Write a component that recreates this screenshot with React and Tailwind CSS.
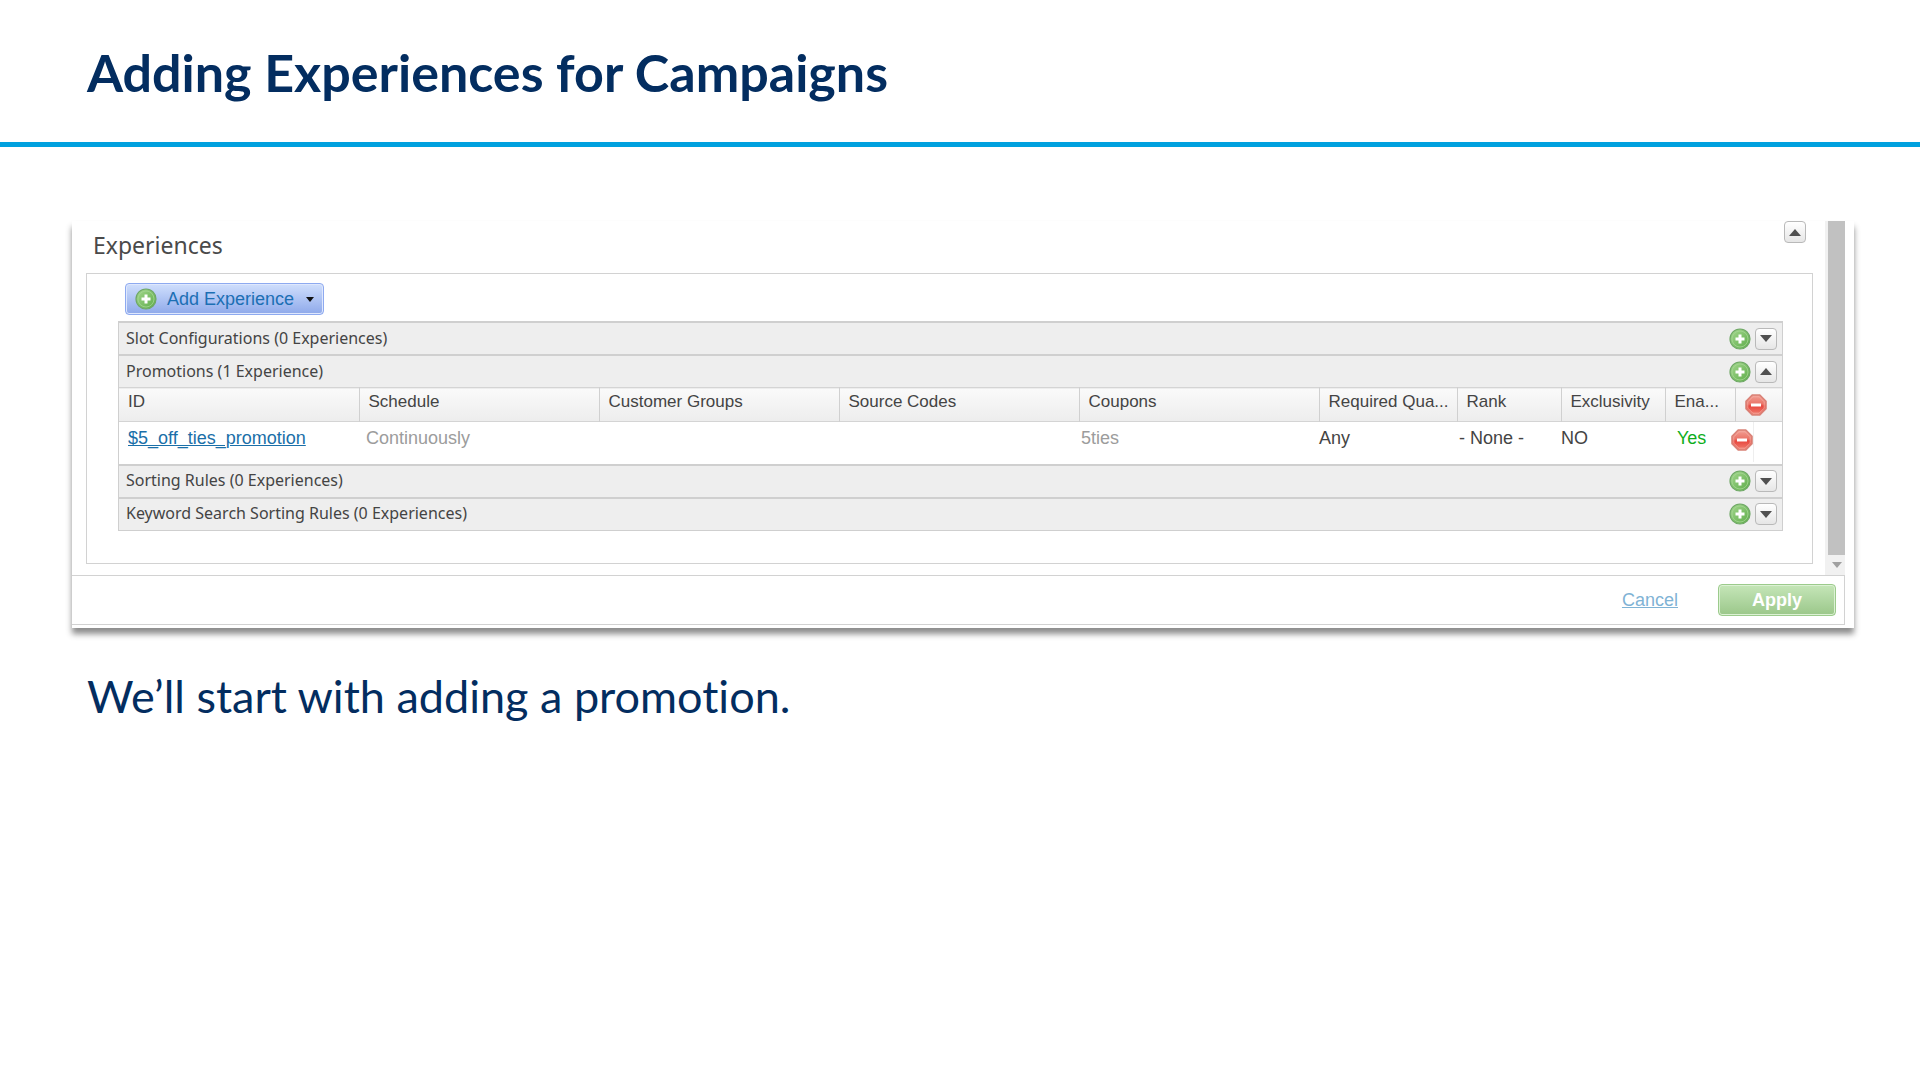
import { useState } from "react";

const columns = [
  { label: "ID" },
  { label: "Schedule" },
  { label: "Customer Groups" },
  { label: "Source Codes" },
  { label: "Coupons" },
  { label: "Required Qua...", width: "w-[138px]" },
  { label: "Rank", width: "w-[104px]" },
  { label: "Exclusivity", width: "w-[104px]" },
  { label: "Ena...", width: "w-[70px]" },
];

function AddIcon() {
  return (
    <svg viewBox="0 0 22 22" className="size-[22px] shrink-0" aria-hidden="true">
      <defs>
        <linearGradient id="addFill" x1="0" y1="0" x2="1" y2="1">
          <stop offset="0" stopColor="#a5d88f" />
          <stop offset="1" stopColor="#5cab48" />
        </linearGradient>
      </defs>
      <circle cx="11" cy="11" r="10" fill="url(#addFill)" stroke="#6fa866" strokeWidth="1.2" />
      <circle cx="11" cy="11" r="8" fill="none" stroke="#a5d694" strokeWidth="0.8" />
      <path d="M11 6.5v9M6.5 11h9" stroke="#fff" strokeWidth="3" />
    </svg>
  );
}

function RemoveIcon() {
  return (
    <svg viewBox="0 0 22 22" className="size-[22px] shrink-0" aria-hidden="true">
      <defs>
        <linearGradient id="removeFill" x1="0" y1="0" x2="0" y2="1">
          <stop offset="0" stopColor="#f2a094" />
          <stop offset="0.45" stopColor="#ea7468" />
          <stop offset="0.55" stopColor="#e8473e" />
          <stop offset="1" stopColor="#f08072" />
        </linearGradient>
      </defs>
      <path
        d="M7.2 1h7.6L21 7.2v7.6L14.8 21H7.2L1 14.8V7.2z"
        fill="url(#removeFill)"
        stroke="#d98277"
        strokeWidth="1.6"
        strokeLinejoin="round"
      />
      <path
        d="M7.8 2.8h6.4l5 5v6.4l-5 5H7.8l-5-5V7.8z"
        fill="none"
        stroke="#f4aea4"
        strokeWidth="0.8"
      />
      <path d="M6 11h10" stroke="#fff" strokeWidth="3" />
    </svg>
  );
}

function ToggleButton({ open, label, onClick }) {
  return (
    <button
      type="button"
      aria-label={label}
      aria-expanded={open}
      onClick={onClick}
      className="flex size-[22px] shrink-0 items-center justify-center rounded border border-[#b9b9b9] bg-linear-to-b from-white to-[#e6e6e6]"
    >
      <svg viewBox="0 0 12 7" className="h-[7px] w-3">
        <path d={open ? "M6 0l6 7H0z" : "M0 0h12L6 7z"} fill="#505050" />
      </svg>
    </button>
  );
}

function Section({ title, open, onToggle, children }) {
  return (
    <section>
      <div className="flex h-[33px] items-center justify-between border-t-2 border-[#cfcfcf] bg-[#eeeeee] pr-[5px] pl-[7px]">
        <h3 className="pb-[2px] font-['Noto_Sans',sans-serif] text-[16px] leading-6 text-[#444]">
          {title}
        </h3>
        <div className="flex items-center gap-1">
          <button type="button" aria-label={`Add to ${title}`}>
            <AddIcon />
          </button>
          <ToggleButton open={open} label={`Toggle ${title}`} onClick={onToggle} />
        </div>
      </div>
      {open && children}
    </section>
  );
}

function PromotionsTable() {
  return (
    <table className="w-full table-fixed border-collapse bg-white text-left">
      <thead>
        <tr className="h-[34px] border-y border-[#d4d4d4] bg-linear-to-b from-[#fafafa] to-[#ededed] text-[17px] leading-6 text-[#444]">
          {columns.map((col) => (
            <th
              key={col.label}
              scope="col"
              className={`border-r border-[#d0d0d0] pb-[5px] pl-[9px] font-normal whitespace-nowrap ${col.width || ""}`}
            >
              {col.label}
            </th>
          ))}
          <th scope="col" className="w-[47px] pl-[9px]">
            <button type="button" aria-label="Remove all" className="block">
              <RemoveIcon />
            </button>
          </th>
        </tr>
      </thead>
      <tbody>
        <tr className="h-[42px] align-top text-[18px] leading-8 text-[#444]">
          <td className="pl-[9px]">
            <a href="#promotion" className="text-[#1a6fa8] underline">
              $5_off_ties_promotion
            </a>
          </td>
          <td className="pl-[7px] text-[#9c9c9c]">Continuously</td>
          <td></td>
          <td></td>
          <td className="pl-[2px] text-[#9c9c9c]">5ties</td>
          <td>Any</td>
          <td className="pl-[2px]">- None -</td>
          <td>NO</td>
          <td className="pl-3 text-[#0fae1c]">Yes</td>
          <td>
            <button
              type="button"
              aria-label="Remove promotion"
              className="-ml-1 flex h-10 items-center border-r border-[#eeeeee] pb-1"
            >
              <RemoveIcon />
            </button>
          </td>
        </tr>
      </tbody>
    </table>
  );
}

export default function App() {
  const [panelOpen, setPanelOpen] = useState(true);
  const [open, setOpen] = useState({ promotions: true });

  const toggle = (key) => setOpen((prev) => ({ ...prev, [key]: !prev[key] }));

  return (
    <div className="min-h-screen bg-white font-['Liberation_Sans',Arial,sans-serif]">
      <header className="border-b-[5px] border-[#00a1df] pt-10 pb-[38px] pl-[87px]">
        <h1 className="font-['Lato',sans-serif] text-[52px] leading-16 font-bold text-[#032d60]">
          Adding Experiences for Campaigns
        </h1>
      </header>

      <main className="pt-[74px] pr-[66px] pl-[72px]">
        <div className="bg-white pr-[9px] pb-[3px] shadow-[0_6px_6px_0_rgba(0,0,0,0.45)]">
          {/* Scrollable area */}
          <div className="flex">
            <div className="min-w-0 flex-1 pr-3 pb-[11px] pl-[14px]">
              <div className="flex h-[52px] items-start justify-between pr-[7px] pl-[7px]">
                <h2 className="pt-2 font-['Noto_Sans',sans-serif] text-[23px] leading-8 text-[#4a4a4a]">
                  Experiences
                </h2>
                <ToggleButton
                  open={panelOpen}
                  label="Toggle experiences"
                  onClick={() => setPanelOpen(!panelOpen)}
                />
              </div>

              {panelOpen && (
                <div className="border border-[#d2d2d2] pt-[9px] pr-[29px] pb-8 pl-[31px]">
                  <button
                    type="button"
                    className="ml-[7px] flex h-8 items-center rounded border border-[#8eaaf0] bg-linear-to-b from-[#d0dffc] to-[#8fa9ea] px-[9px] text-[18px] leading-6 text-[#1c6fb4] inset-ring-1 inset-ring-[#dfe8fd]"
                  >
                    <AddIcon />
                    <span className="pr-3 pl-[10px]">Add Experience</span>
                    <svg viewBox="0 0 8 5" className="h-[5px] w-2">
                      <path d="M0 0h8L4 5z" fill="#111" />
                    </svg>
                  </button>

                  <div className="mt-[6px] border border-t-0 border-[#cfcfcf]">
                    <Section
                      title="Slot Configurations (0 Experiences)"
                      open={!!open.slots}
                      onToggle={() => toggle("slots")}
                    />
                    <Section
                      title="Promotions (1 Experience)"
                      open={!!open.promotions}
                      onToggle={() => toggle("promotions")}
                    >
                      <PromotionsTable />
                    </Section>
                    <Section
                      title="Sorting Rules (0 Experiences)"
                      open={!!open.sorting}
                      onToggle={() => toggle("sorting")}
                    />
                    <Section
                      title="Keyword Search Sorting Rules (0 Experiences)"
                      open={!!open.keyword}
                      onToggle={() => toggle("keyword")}
                    />
                  </div>
                </div>
              )}
            </div>

            {/* Scrollbar */}
            <div className="flex w-5 flex-col bg-[#f1f1f1] pl-[3px]">
              <div className="flex-1 bg-[#c1c1c1]"></div>
              <div className="flex h-5 items-center justify-center">
                <svg viewBox="0 0 10 6" className="h-[6px] w-[10px]">
                  <path d="M0 0h10L5 6z" fill="#a0a0a0" />
                </svg>
              </div>
            </div>
          </div>

          {/* Actions */}
          <div className="flex h-[50px] items-center justify-end gap-10 border border-l-0 border-[#d2d2d2] pr-2">
            <a href="#cancel" className="text-[18px] leading-6 text-[#7fb3d5] underline">
              Cancel
            </a>
            <button
              type="button"
              className="h-8 w-[118px] rounded border border-[#9ccb8c] bg-linear-to-b from-[#c5e6b8] to-[#9bc78a] text-[18px] leading-6 font-bold text-white inset-ring-1 inset-ring-[#dcf1d4]"
            >
              Apply
            </button>
          </div>
        </div>

        <p className="mt-9 pl-[15px] font-['Lato',sans-serif] text-[45px] leading-16 text-[#032d60] [font-variant-ligatures:none]">
          We’ll start with adding a promotion.
        </p>
      </main>
    </div>
  );
}
